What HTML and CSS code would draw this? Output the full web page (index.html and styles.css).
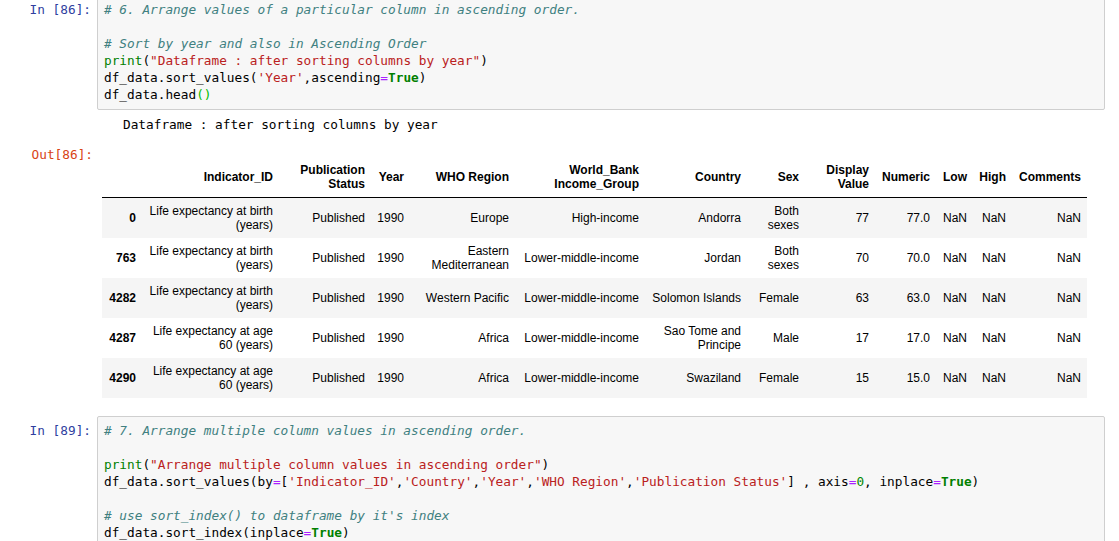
FILE: index.html
```html
<!DOCTYPE html>
<html>
<head>
<meta charset="utf-8">
<link rel="stylesheet" href="styles.css">
</head>
<body>
<div class="notebook">
  <div class="cell first">
    <div class="input">
      <div class="prompt in">In&nbsp;[86]:</div>
      <div class="input-area"><pre class="code"><span class="c"># 6. Arrange values of a particular column in ascending order.</span>

<span class="c"># Sort by year and also in Ascending Order</span>
<span class="b">print</span>(<span class="s">"Dataframe : after sorting columns by year"</span>)
df_data.sort_values(<span class="s">'Year'</span>,ascending<span class="o">=</span><span class="k">True</span>)
df_data.head<span class="mb">()</span></pre></div>
    </div>
    <div class="output">
      <div class="out-row stream-row">
        <div class="prompt"></div>
        <pre class="stream">Dataframe : after sorting columns by year</pre>
      </div>
      <div class="out-row html-row">
        <div class="prompt out">Out[86]:</div>
        <div class="out-html">
          <table class="df">
            <thead>
              <tr>
                <th class="w0"></th>
                <th class="w1">Indicator_ID</th>
                <th class="w2">Publication Status</th>
                <th class="w3">Year</th>
                <th class="w4">WHO Region</th>
                <th class="w5">World_Bank Income_Group</th>
                <th class="w6">Country</th>
                <th class="w7">Sex</th>
                <th class="w8">Display Value</th>
                <th class="w9">Numeric</th>
                <th class="w10">Low</th>
                <th class="w11">High</th>
                <th class="w12">Comments</th>
              </tr>
            </thead>
            <tbody>
              <tr>
                <th>0</th><td>Life expectancy at birth (years)</td><td>Published</td><td>1990</td><td>Europe</td><td>High-income</td><td>Andorra</td><td>Both sexes</td><td>77</td><td>77.0</td><td>NaN</td><td>NaN</td><td>NaN</td>
              </tr>
              <tr>
                <th>763</th><td>Life expectancy at birth (years)</td><td>Published</td><td>1990</td><td>Eastern Mediterranean</td><td>Lower-middle-income</td><td>Jordan</td><td>Both sexes</td><td>70</td><td>70.0</td><td>NaN</td><td>NaN</td><td>NaN</td>
              </tr>
              <tr>
                <th>4282</th><td>Life expectancy at birth (years)</td><td>Published</td><td>1990</td><td>Western Pacific</td><td>Lower-middle-income</td><td>Solomon Islands</td><td>Female</td><td>63</td><td>63.0</td><td>NaN</td><td>NaN</td><td>NaN</td>
              </tr>
              <tr>
                <th>4287</th><td>Life expectancy at age 60 (years)</td><td>Published</td><td>1990</td><td>Africa</td><td>Lower-middle-income</td><td>Sao Tome and Principe</td><td>Male</td><td>17</td><td>17.0</td><td>NaN</td><td>NaN</td><td>NaN</td>
              </tr>
              <tr>
                <th>4290</th><td>Life expectancy at age 60 (years)</td><td>Published</td><td>1990</td><td>Africa</td><td>Lower-middle-income</td><td>Swaziland</td><td>Female</td><td>15</td><td>15.0</td><td>NaN</td><td>NaN</td><td>NaN</td>
              </tr>
            </tbody>
          </table>
        </div>
      </div>
    </div>
  </div>

  <div class="cell second">
    <div class="input">
      <div class="prompt in">In&nbsp;[89]:</div>
      <div class="input-area"><pre class="code"><span class="c"># 7. Arrange multiple column values in ascending order.</span>

<span class="b">print</span>(<span class="s">"Arrange multiple column values in ascending order"</span>)
df_data.sort_values(by<span class="o">=</span>[<span class="s">'Indicator_ID'</span>,<span class="s">'Country'</span>,<span class="s">'Year'</span>,<span class="s">'WHO Region'</span>,<span class="s">'Publication Status'</span>] , axis<span class="o">=</span><span class="n">0</span>, inplace<span class="o">=</span><span class="k">True</span>)

<span class="c"># use sort_index() to dataframe by it's index</span>
df_data.sort_index(inplace<span class="o">=</span><span class="k">True</span>)
</pre></div>
    </div>
  </div>
</div>
</body>
</html>
```

FILE: styles.css
```css
html, body {
  margin: 0;
  padding: 0;
  background: #ffffff;
  overflow: hidden;
}

.notebook {
  width: 1105px;
}

.cell.first {
  margin-top: -5px;
}

.cell.second {
  margin-top: 18px;
}

.input {
  display: flex;
  align-items: flex-start;
}

.prompt {
  flex: 0 0 97px;
  width: 97px;
  box-sizing: border-box;
  padding-right: 6px;
  text-align: right;
  font-family: "DejaVu Sans Mono", monospace;
  font-size: 12.75px;
  line-height: 17px;
  white-space: nowrap;
}

.prompt.in {
  color: #303f9f;
  padding-top: 6px;
}

.prompt.out {
  color: #d84315;
  padding-right: 4px;
}

.input-area {
  flex: 1 1 auto;
  min-width: 0;
  background: #f7f7f7;
  border: 1px solid #cfcfcf;
  border-radius: 2px;
  padding: 5px 6px 6px 6px;
}

.code, .stream {
  margin: 0;
  font-family: "DejaVu Sans Mono", monospace;
  font-size: 12.75px;
  line-height: 17px;
  color: #000;
  white-space: pre;
}

.c { color: #408080; font-style: italic; }
.b { color: #008000; }
.s { color: #ba2121; }
.o { color: #aa22ff; }
.k { color: #008000; font-weight: bold; }
.n { color: #008800; }
.mb { color: #00bb00; }

.out-row {
  display: flex;
  align-items: flex-start;
}

.stream-row {
  margin-top: 6px;
}

.stream {
  padding-left: 26px;
}

.html-row {
  margin-top: 13px;
}

.out-html {
  padding-left: 5px;
  padding-top: 11px;
}

.df {
  border-collapse: collapse;
  border-spacing: 0;
  table-layout: fixed;
  width: 985px;
  font-family: "Liberation Sans", Arial, sans-serif;
  font-size: 12px;
  line-height: 14px;
  color: #000;
}

.df th, .df td {
  box-sizing: border-box;
  padding: 6px;
  text-align: right;
  vertical-align: middle;
  border: none;
}

.df th {
  font-weight: bold;
}

.df thead th {
  border-bottom: 1px solid #000;
}

.df tbody tr:nth-child(odd) {
  background: #f5f5f5;
}

.w0 { width: 40px; }
.w1 { width: 137px; }
.w2 { width: 92px; }
.w3 { width: 39px; }
.w4 { width: 105px; }
.w5 { width: 130px; }
.w6 { width: 102px; }
.w7 { width: 58px; }
.w8 { width: 70px; }
.w9 { width: 61px; }
.w10 { width: 37px; }
.w11 { width: 39px; }
.w12 { width: 75px; }
```
